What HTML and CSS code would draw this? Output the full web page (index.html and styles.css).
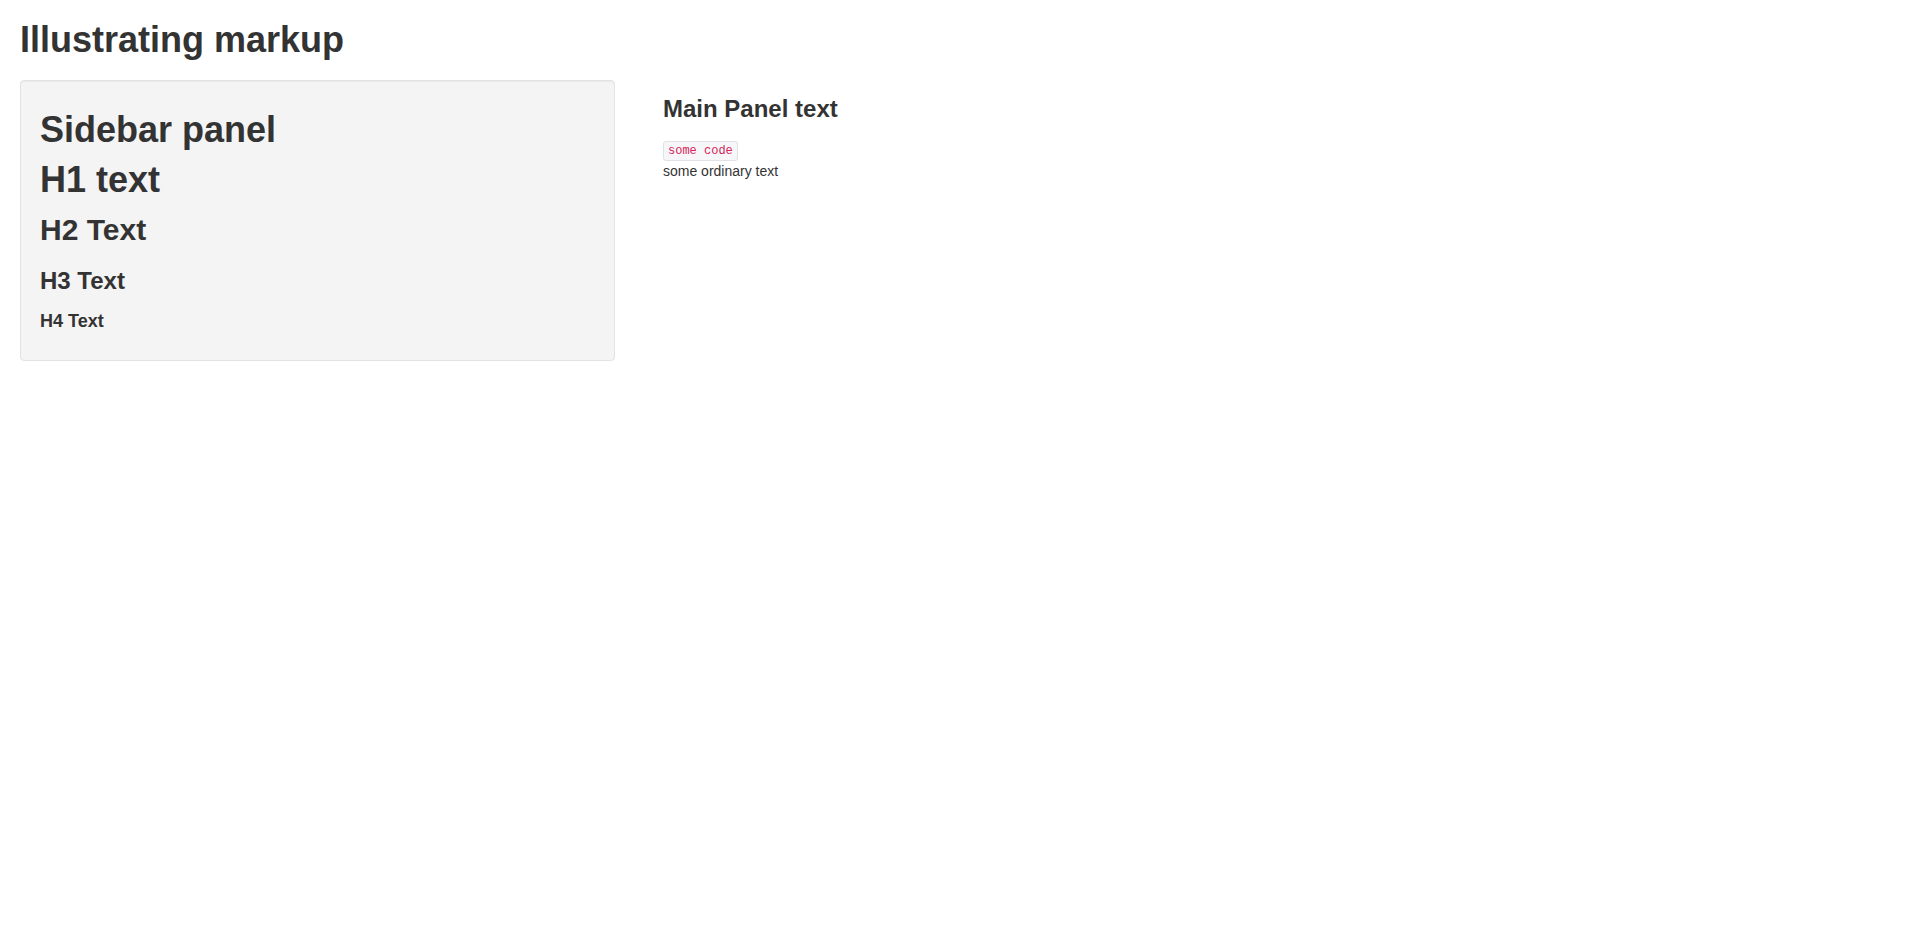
FILE: index.html
```html
<!DOCTYPE html>
<html lang="en">
<head>
<meta charset="utf-8">
<title>Illustrating markup</title>
<link rel="stylesheet" href="styles.css">
</head>
<body>
<div class="page">
  <h1 class="page-title">Illustrating markup</h1>
  <div class="layout">
    <div class="sidebar">
      <h1 class="sb-title">Sidebar panel</h1>
      <h1 class="sb-h1">H1 text</h1>
      <h2 class="sb-h2">H2 Text</h2>
      <h3 class="sb-h3">H3 Text</h3>
      <h4 class="sb-h4">H4 Text</h4>
    </div>
    <div class="main">
      <h3 class="main-title">Main Panel text</h3>
      <div class="code-line"><code class="code">some code</code></div>
      <div class="plain">some ordinary text</div>
    </div>
  </div>
</div>
</body>
</html>
```
FILE: styles.css
```css
html, body {
  margin: 0;
  padding: 0;
  background: #ffffff;
}

body {
  font-family: "Liberation Sans", Arial, sans-serif;
  font-size: 14px;
  line-height: 20px;
  color: #333333;
}

.page {
  padding: 0 20px;
}

h1, h2, h3, h4 {
  font-weight: bold;
  line-height: 1.1;
  color: #333333;
}

.page-title {
  font-size: 36px;
  margin: 19.5px 0 20.5px;
}

.layout {
  display: flex;
  align-items: flex-start;
}

.sidebar {
  width: 595px;
  box-sizing: border-box;
  padding: 19px;
  background: #f4f4f4;
  border: 1px solid #e3e3e3;
  border-radius: 4px;
  box-shadow: inset 0 1px 1px rgba(0, 0, 0, 0.05);
}

.sb-title {
  font-size: 36px;
  margin: 10.7px 0 0;
}

.sb-h1 {
  font-size: 36px;
  margin: 10.4px 0 0;
}

.sb-h2 {
  font-size: 30px;
  margin: 13.4px 0 0;
}

.sb-h3 {
  font-size: 24px;
  margin: 21.6px 0 0;
}

.sb-h4 {
  font-size: 18px;
  margin: 17.7px 0 9.3px;
}

.main {
  margin-left: 48px;
  flex: 1;
}

.main-title {
  font-size: 24px;
  margin: 16.7px 0 16.5px;
}

.code {
  font-family: "Liberation Mono", "DejaVu Sans Mono", monospace;
  font-size: 12px;
  padding: 2px 4px;
  color: #d6245a;
  background: #f7f7f9;
  border: 1px solid #e1e1e8;
  border-radius: 3px;
}

.plain {
  font-size: 14px;
}
```
